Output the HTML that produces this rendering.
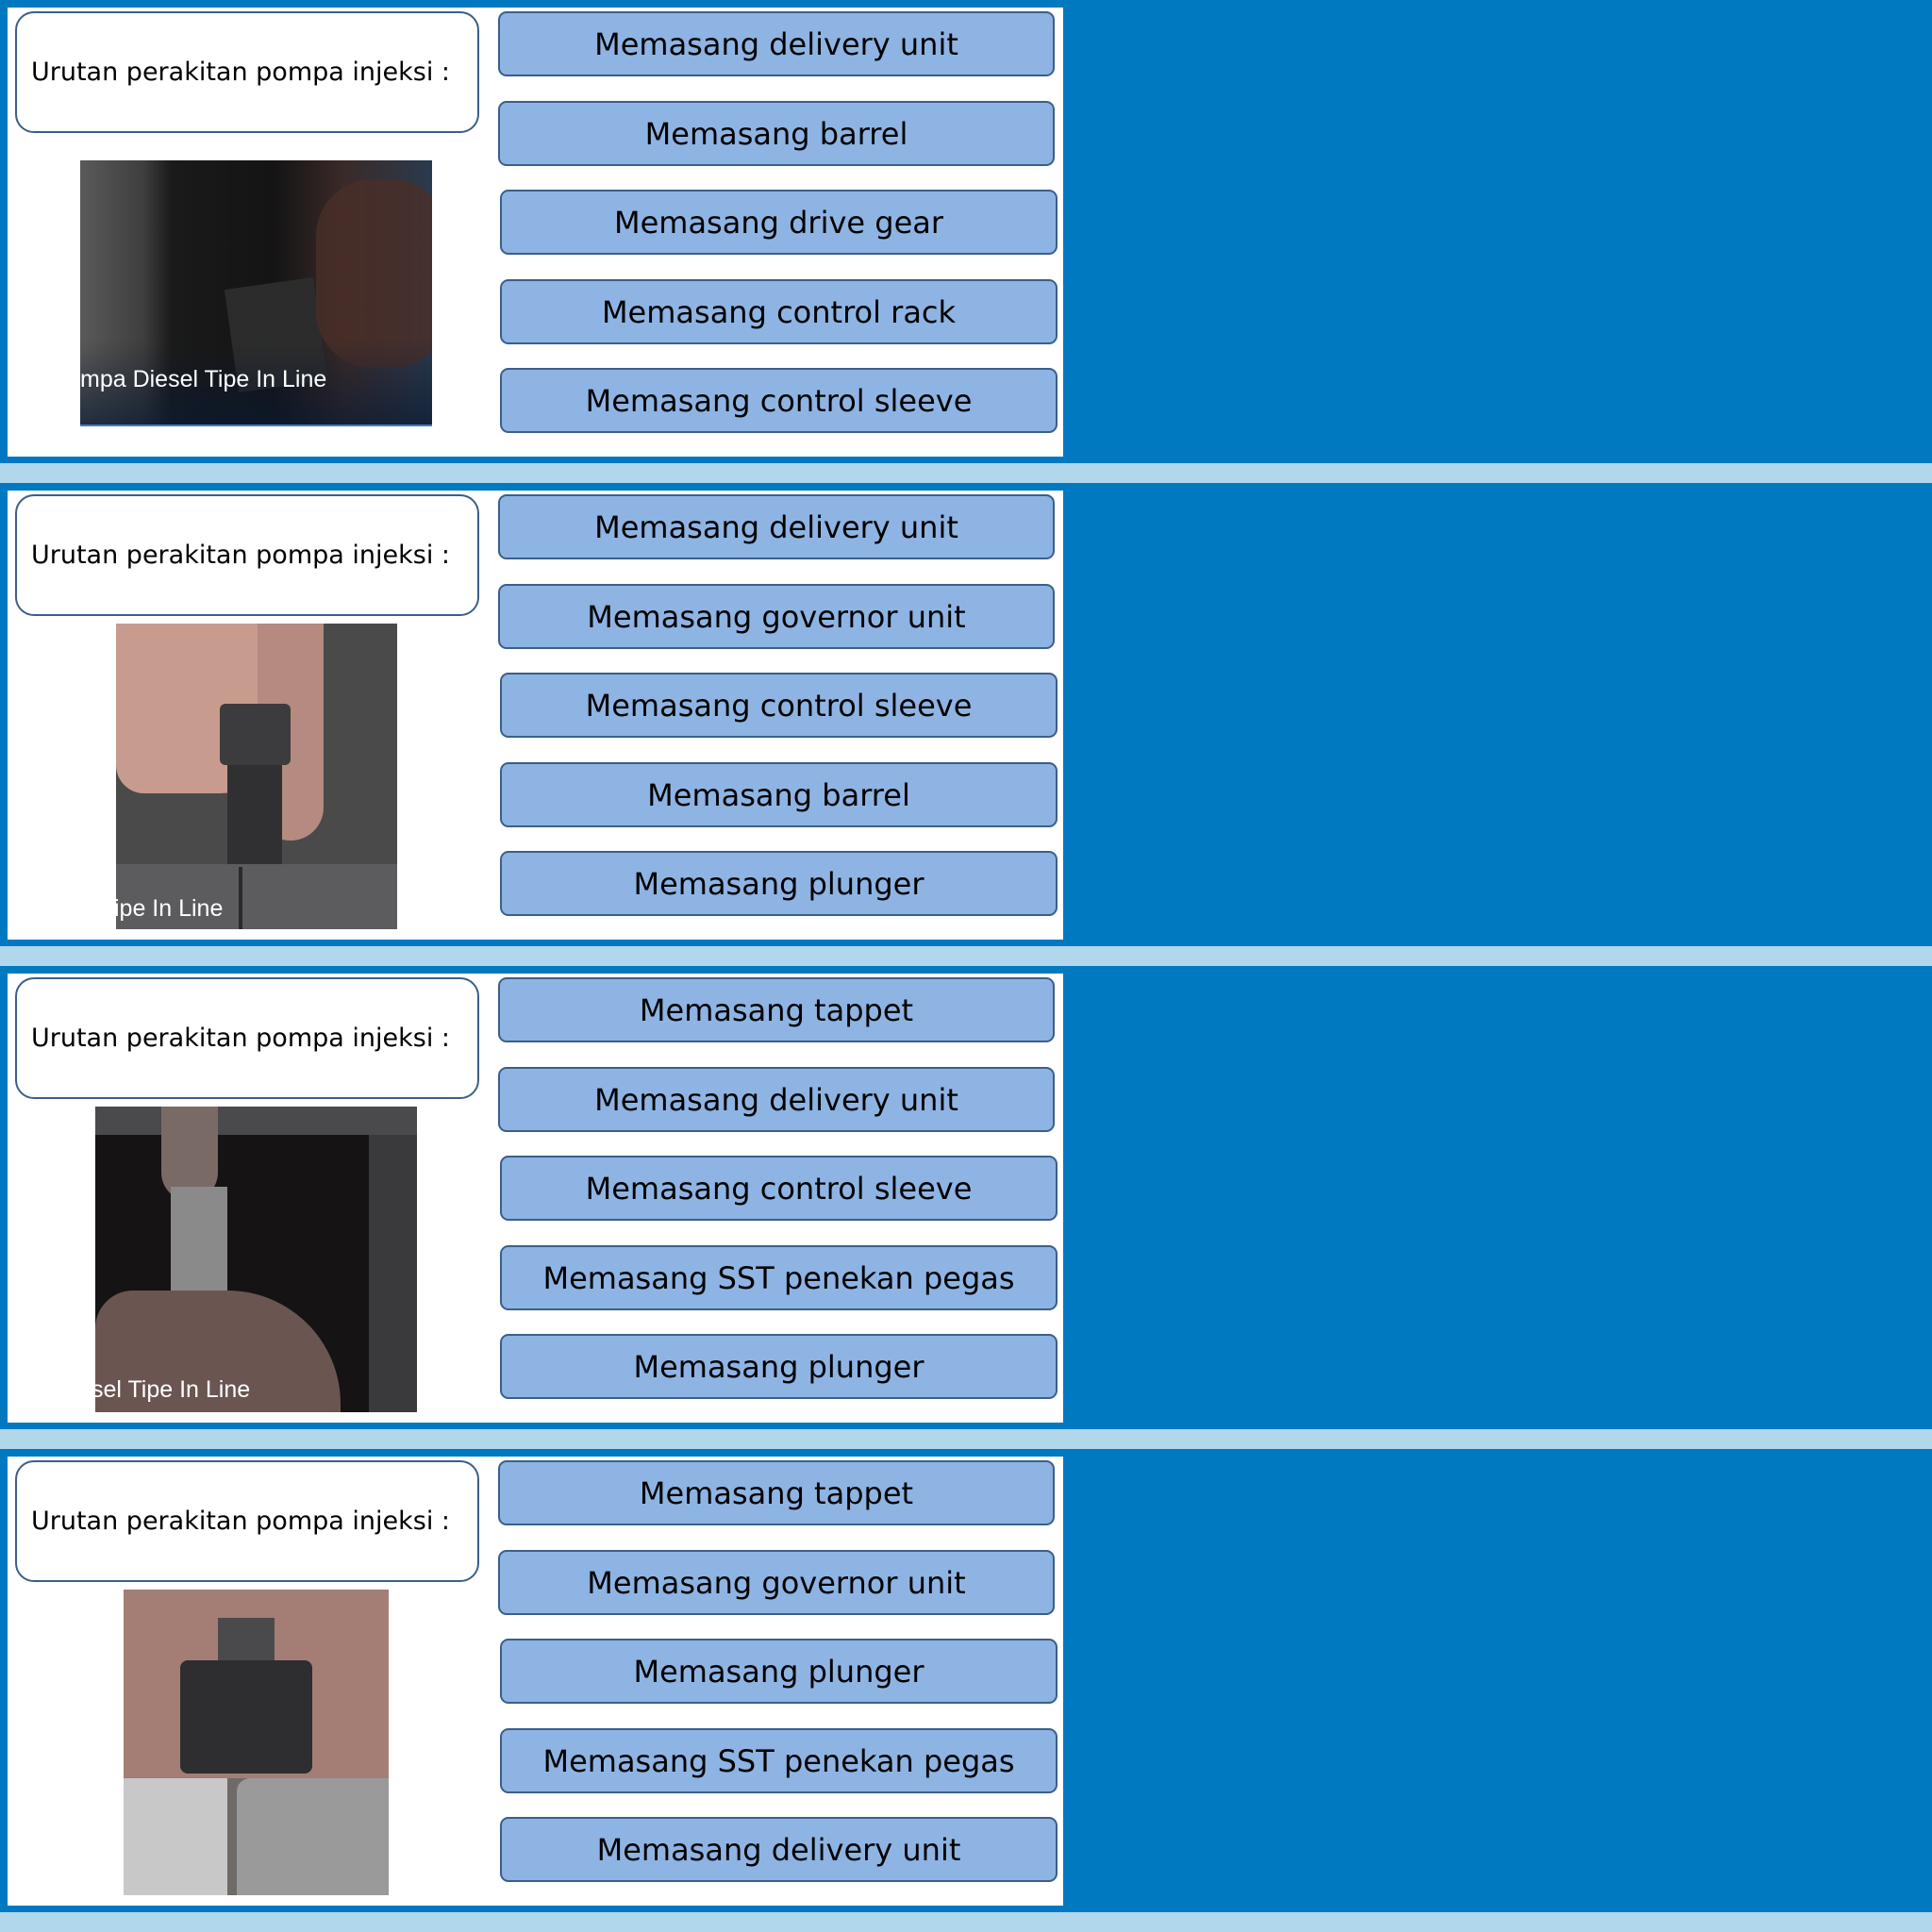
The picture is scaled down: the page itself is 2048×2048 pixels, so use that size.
<!DOCTYPE html>
<html><head><meta charset="utf-8"><style>
*{margin:0;padding:0;box-sizing:border-box}
body{width:2048px;height:2048px;background:#0079c1;position:relative;overflow:hidden;font-family:"DejaVu Sans","Liberation Sans",sans-serif}
.sec{position:absolute;left:0;width:2048px;height:512px;background:#0079c1}
.band{position:absolute;left:0;top:491px;width:2048px;height:21px;background:#b1d7ec}
.panel{position:absolute;left:8px;top:8px;width:1119px;height:476px;background:#fff}
.lab{position:absolute;left:8px;top:4px;width:492px;height:129px;border:2.5px solid #3a5f8a;border-radius:20px;background:#fff;font-size:27px;color:#000;padding-left:15px;line-height:126px;white-space:nowrap}
.btn{position:absolute;height:69px;border:2.5px solid #3a5f8a;border-radius:9px;background:#8eb4e3;font-size:32px;color:#000;text-align:center;line-height:66px;white-space:nowrap}
.img{position:absolute;overflow:hidden}
.cap{position:absolute;color:#fff;font-family:"Liberation Sans",sans-serif;font-size:25px;white-space:nowrap}
</style></head><body>

<!-- section 1 -->
<div class="sec" style="top:0">
<div class="panel">
<div class="lab">Urutan perakitan pompa injeksi :</div>
<div class="btn" style="left:520px;top:4px;width:590px">Memasang delivery unit</div>
<div class="btn" style="left:520px;top:99px;width:590px">Memasang barrel</div>
<div class="btn" style="left:522px;top:193px;width:591px">Memasang drive gear</div>
<div class="btn" style="left:522px;top:288px;width:591px">Memasang control rack</div>
<div class="btn" style="left:522px;top:382px;width:591px">Memasang control sleeve</div>
<div class="img" style="left:77px;top:162px;width:373px;height:282px;background:linear-gradient(90deg,#5a5a5a 0%,#3e3e3e 18%,#1a1a1a 26%,#141414 55%,#3a2a28 75%,#2a3a4e 100%)">
 <div style="position:absolute;left:160px;top:130px;width:95px;height:110px;background:#2c2c2c;transform:rotate(-8deg)"></div>
 <div style="position:absolute;left:250px;top:20px;width:140px;height:200px;background:#4a2e28;border-radius:60px;opacity:.8"></div>
 <div style="position:absolute;left:0;top:190px;width:373px;height:92px;background:linear-gradient(180deg,rgba(0,0,0,0),rgba(10,25,50,.7))"></div>
 <div class="cap" style="left:0;top:218px">mpa Diesel Tipe In Line</div>
 <div style="position:absolute;left:0;bottom:0;width:373px;height:2px;background:#3c7fc9"></div>
</div>
</div>
<div class="band"></div>
</div>

<!-- section 2 -->
<div class="sec" style="top:512px">
<div class="panel">
<div class="lab">Urutan perakitan pompa injeksi :</div>
<div class="btn" style="left:520px;top:4px;width:590px">Memasang delivery unit</div>
<div class="btn" style="left:520px;top:99px;width:590px">Memasang governor unit</div>
<div class="btn" style="left:522px;top:193px;width:591px">Memasang control sleeve</div>
<div class="btn" style="left:522px;top:288px;width:591px">Memasang barrel</div>
<div class="btn" style="left:522px;top:382px;width:591px">Memasang plunger</div>
<div class="img" style="left:115px;top:141px;width:298px;height:324px;background:#4a4a4a">
 <div style="position:absolute;left:0;top:0;width:200px;height:180px;background:#c79c8e;border-radius:0 0 90px 30px"></div>
 <div style="position:absolute;left:150px;top:0;width:70px;height:230px;background:#b58a80;border-radius:0 0 35px 35px"></div>
 <div style="position:absolute;left:110px;top:85px;width:75px;height:65px;background:#3c3c3e;border-radius:6px"></div>
 <div style="position:absolute;left:118px;top:150px;width:58px;height:110px;background:#303032"></div>
 <div style="position:absolute;left:0;top:255px;width:298px;height:69px;background:#5c5c5e"></div>
 <div style="position:absolute;left:130px;top:258px;width:4px;height:66px;background:#2a2a2a"></div>
 <div class="cap" style="left:-2px;top:288px">ipe In Line</div>
</div>
</div>
<div class="band"></div>
</div>

<!-- section 3 -->
<div class="sec" style="top:1024px">
<div class="panel">
<div class="lab">Urutan perakitan pompa injeksi :</div>
<div class="btn" style="left:520px;top:4px;width:590px">Memasang tappet</div>
<div class="btn" style="left:520px;top:99px;width:590px">Memasang delivery unit</div>
<div class="btn" style="left:522px;top:193px;width:591px">Memasang control sleeve</div>
<div class="btn" style="left:522px;top:288px;width:591px">Memasang SST penekan pegas</div>
<div class="btn" style="left:522px;top:382px;width:591px">Memasang plunger</div>
<div class="img" style="left:93px;top:141px;width:341px;height:324px;background:#151313">
 <div style="position:absolute;left:0;top:0;width:341px;height:30px;background:#4a4a4c"></div>
 <div style="position:absolute;left:290px;top:30px;width:51px;height:294px;background:#3a3a3c"></div>
 <div style="position:absolute;left:70px;top:0;width:60px;height:100px;background:#7a6a66;border-radius:0 0 30px 30px"></div>
 <div style="position:absolute;left:80px;top:85px;width:60px;height:110px;background:#8a8a8a"></div>
 <div style="position:absolute;left:0;top:195px;width:260px;height:129px;background:#6a5550;border-radius:40px 120px 0 0"></div>
 <div class="cap" style="left:-4px;top:286px">sel Tipe In Line</div>
</div>
</div>
<div class="band"></div>
</div>

<!-- section 4 -->
<div class="sec" style="top:1536px">
<div class="panel">
<div class="lab">Urutan perakitan pompa injeksi :</div>
<div class="btn" style="left:520px;top:4px;width:590px">Memasang tappet</div>
<div class="btn" style="left:520px;top:99px;width:590px">Memasang governor unit</div>
<div class="btn" style="left:522px;top:193px;width:591px">Memasang plunger</div>
<div class="btn" style="left:522px;top:288px;width:591px">Memasang SST penekan pegas</div>
<div class="btn" style="left:522px;top:382px;width:591px">Memasang delivery unit</div>
<div class="img" style="left:123px;top:141px;width:281px;height:324px;background:#6e6a68">
 <div style="position:absolute;left:0;top:0;width:281px;height:200px;background:#a47e74"></div>
 <div style="position:absolute;left:100px;top:30px;width:60px;height:50px;background:#4a4a4c"></div>
 <div style="position:absolute;left:60px;top:75px;width:140px;height:120px;background:#2e2e30;border-radius:8px"></div>
 <div style="position:absolute;left:0;top:200px;width:110px;height:124px;background:#c8c8c8"></div>
 <div style="position:absolute;left:120px;top:200px;width:161px;height:124px;background:#9a9a9a;border-radius:14px 0 0 0"></div>
</div>
</div>
<div class="band"></div>
</div>

</body></html>
